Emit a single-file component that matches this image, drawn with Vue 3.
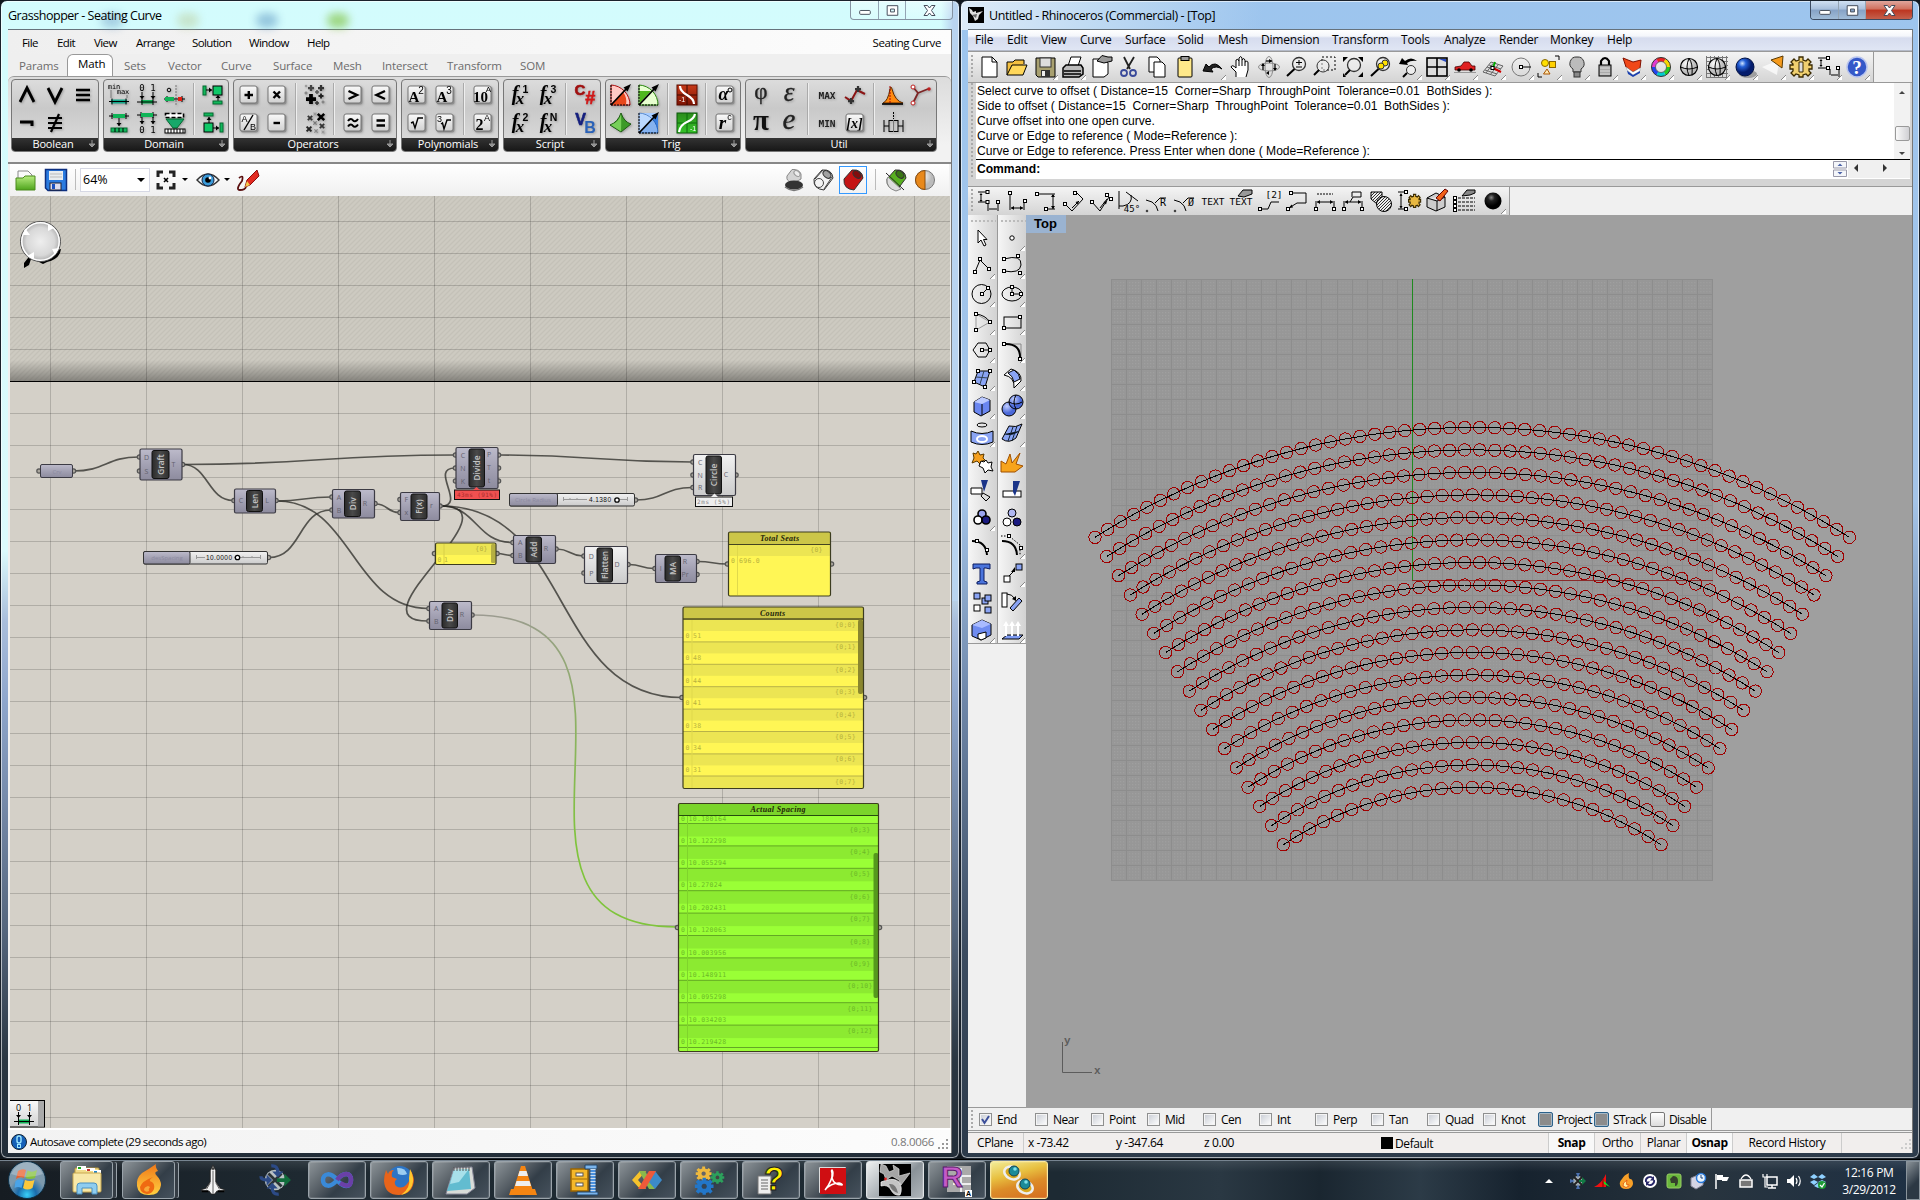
<script setup>
const F = 'font-family="Liberation Sans"'
const K = 'stroke="#000" fill="none"'
const p = (d, a = K) => `<path d="${d}" ${a}/>`
const r = (x, y, w, h, a) => `<rect x="${x}" y="${y}" width="${w}" height="${h}" ${a}/>`
const c = (x, y, q, a) => `<circle cx="${x}" cy="${y}" r="${q}" ${a}/>`
const t = (x, y, s, size, a = F) => `<text x="${x}" y="${y}" font-size="${size}" text-anchor="middle" letter-spacing="0" ${a}>${s}</text>`
const sq = (x, y) => r(x - 1.5, y - 1.5, 3, 3, 'fill="#fff" stroke="#000"')
const B = 'fill="#000"'
const SER = 'font-family="Liberation Serif" font-weight="bold"'
const ITA = 'font-family="Liberation Serif" font-style="italic" font-weight="bold"'
const MONO = 'font-family="DejaVu Sans Mono"'
const key = (s) => r(3.5, 3.5, 18, 18, 'rx="2" fill="#777" opacity=".5"') + r(3, 3, 17, 17, 'rx="2" fill="url(#gKey)" stroke="#777"') + s
const G = 'fill="#0fb457"'
const GB = 'fill="#12b85c" stroke="#046b30"'
const fx = (s) => t(8, 17, 'f', 20, ITA) + t(13, 21, 'x', 17, ITA) + t(18.5, 9.5, s, 10.5, F + ' font-weight="bold"')
const plus = (x, y, s, col) => p(`M${x - s} ${y}H${x + s}M${x} ${y - s}V${y + s}`, `stroke="${col}" stroke-width="${s * 0.75}"`)
const cross = (x, y, s, col) => p(`M${x - s} ${y - s}L${x + s} ${y + s}M${x - s} ${y + s}L${x + s} ${y - s}`, `stroke="${col}" stroke-width="${s * 0.8}"`)
const arrowDn = (x, y1, y2) => p(`M${x} ${y1}V${y2}`) + p(`M${x - 2.5} ${y2 - 3}H${x + 2.5}L${x} ${y2}Z`, B)
const barH = (y) => p(`M2 ${y}H22M5 ${y - 3}V${y + 3}M19 ${y - 3}V${y + 3}`)

const ribbonIcons = {
  and: p('M5 19L12 5L19 19', 'stroke="#000" stroke-width="2.8" fill="none"'),
  or: p('M5 5L12 19L19 5', 'stroke="#000" stroke-width="2.8" fill="none"'),
  equiv: p('M5 7H19M5 12H19M5 17H19', 'stroke="#000" stroke-width="2.4"'),
  not: p('M5 11H17V15', 'stroke="#000" stroke-width="3" fill="none"'),
  neq: p('M5 7H19M5 12H19M5 17H19M16 3L8 21', 'stroke="#000" stroke-width="2.2"'),
  minmax: t(7, 6, 'min', 7, MONO) + t(16, 11, 'max', 7, MONO) + r(4, 16.5, 16, 4, 'fill="#12a88a"') + barH(18.5) + p('M4 7V15M20 12V15', 'stroke="#777"'),
  dom01: t(7, 8, '0', 9, MONO) + t(18, 8, '1', 9, MONO) + r(6, 17, 12, 3.5, G) + p('M2 19H22M7 16V22M18 16V22') + arrowDn(7, 9, 16) + arrowDn(18, 9, 16),
  inc: c(6, 7, 1.8, 'fill="none" stroke="#000"') + p('M13 2V22', 'stroke="#777" stroke-dasharray="2 1"') + p('M1 16H22M4 13V19M19 13V19') + r(2, 14, 9, 4, G) + r(15, 14, 4, 4, 'fill="#e22012"'),
  consec: p('M2 5H22M5 2V8M19 2V8') + r(6, 3, 12, 4, G) + arrowDn(12, 7, 15) + r(4, 17, 16, 4, GB) + p('M8 17V21M12 17V21M16 17V21'),
  divdom: p('M2 4H22M6 1V7M18 1V7') + r(6, 2, 12, 4, G) + arrowDn(7, 6, 13) + arrowDn(18, 6, 13) + t(7, 22, '0', 9, MONO) + t(18, 22, '1', 9, MONO),
  remap: r(2.5, 2.5, 18, 4, 'fill="#fff" stroke="#000" stroke-dasharray="4 2" stroke-width="1.6"') + p('M3 8H21L14 17H10Z', 'fill="#17a86a" stroke="#046b30"') + r(2, 18, 20, 4, 'fill="#fff" stroke="#000"') + p('M5 18V22M8 18V22M11 18V22M14 18V22M17 18V22M20 18V22'),
  sq1: r(2, 3, 3, 9, GB) + r(12, 3, 9, 9, 'fill="#10c868" stroke="#000"') + p('M5 7H11M17 13V18') + p('M8 4.5V9.5L11 7ZM14.5 15H19.5L17 12Z', B) + r(12, 18, 9, 3, GB),
  sq2: r(3, 2, 9, 3, GB) + r(3, 12, 9, 9, 'fill="#10c868" stroke="#000"') + p('M8 6V12M12 17H18') + p('M5.5 9H10.5L8 6ZM15 14.5V19.5L18 17Z', B) + r(19, 12, 3, 9, GB),
  add: key(p('M7.5 12H16M11.8 8V16', 'stroke="#000" stroke-width="2.4"')),
  mul: key(p('M8.5 8.5L15 15M15 8.5L8.5 15', 'stroke="#000" stroke-width="2.4"')),
  div: key(t(7.5, 11, 'A', 9) + t(16, 19, 'B', 9) + p('M7 19L16 4', 'stroke="#000" stroke-width="1.4"')),
  sub: key(p('M8.5 12H15', 'stroke="#000" stroke-width="2.4"')),
  mass: plus(8, 16, 5, '#000') + plus(18, 5, 3, '#333') + plus(8, 5, 3, '#444') + plus(18, 13, 2.5, '#222') + plus(14, 9, 2, '#555') + plus(14, 20, 2, '#333') + plus(3, 10, 1.6, '#777') + plus(20, 19, 1.6, '#777') + plus(3, 3, 1.2, '#888'),
  massx: cross(18, 6, 3.2, '#000') + cross(7, 7, 2.2, '#333') + cross(6, 18, 2.4, '#222') + cross(19, 15, 2.2, '#333') + cross(12, 12, 1.6, '#777') + cross(13, 20, 1.6, '#888') + cross(12, 3, 1.4, '#999') + cross(20, 21, 1.4, '#999'),
  gt: key(p('M7.5 8L16 12L7.5 16', 'stroke="#000" stroke-width="2.4" fill="none"')),
  lt: key(p('M16 8L7.5 12L16 16', 'stroke="#000" stroke-width="2.4" fill="none"')),
  approx: key(p('M7 10C9 7 11 8 12 9.3S15 11 17 8M7 15.5C9 12.5 11 13.5 12 14.8S15 16.5 17 13.5', 'stroke="#000" stroke-width="2" fill="none"')),
  eq: key(p('M7.5 9.5H16M7.5 14.5H16', 'stroke="#000" stroke-width="2.4"')),
  a2: key(t(9, 18.5, 'A', 15, SER) + t(16, 10.5, '2', 10)),
  a3: key(t(9, 18.5, 'A', 15, SER) + t(16, 10.5, '3', 10)),
  p10: key(t(9.5, 18.5, '10', 15, SER) + t(17.5, 9, 'A', 8)),
  sqrt: key(p('M6 12L8 11L10 17L13 7H18', 'stroke="#000" stroke-width="1.4" fill="none"')),
  cbrt: key(p('M8 13L9.5 12L11 18L14 9H18', 'stroke="#000" stroke-width="1.4" fill="none"') + t(6.5, 10.5, '3', 9)),
  p2a: key(t(8.5, 18.5, '2', 16, SER) + t(16, 10, 'A', 9)),
  fx1: fx('1'), fx3: fx('3'), fx2: fx('2'), fxn: fx('N'),
  cs: t(7, 12, 'C', 15, F + ' font-weight="bold" fill="#a01010" stroke="#a01010" stroke-width=".6"') + t(17, 21, '#', 18, F + ' font-weight="bold" font-style="italic" fill="#d01818" stroke="#d01818" stroke-width=".6"'),
  vb: t(7.5, 14, 'V', 16, F + ' font-weight="bold" fill="#16207e" stroke="#16207e" stroke-width=".6"') + t(17, 22, 'B', 16, F + ' font-weight="bold" fill="#2a62b8"'),
  sin: p('M2 22V2A20 20 0 0 1 21 22Z', 'fill="#ffc9c4" stroke="#b01010"') + p('M2 22L14 9A16 16 0 0 1 17 22Z', 'fill="#e8481c"') + p('M2 22V2M2 22H21', 'stroke="#000" stroke-dasharray="2 1"') + p('M2 22L19 4', 'stroke="#000" stroke-width="1.8"') + p('M22 1L14.5 4.5L18.5 8.5Z', B),
  cos: p('M2 22V2A20 20 0 0 1 21 22Z', 'fill="#e8ffd0" stroke="#2c8a10"') + p('M2 8H14L3 20Z', 'fill="#4fb81c"') + p('M2 22V2M2 22H21', 'stroke="#000" stroke-dasharray="2 1"') + p('M2 22L19 4', 'stroke="#000" stroke-width="1.8"') + p('M22 1L14.5 4.5L18.5 8.5Z', B),
  tan: p('M2 22V2H21V22Z', 'fill="#a8ccff"') + p('M2 22L21 3V22Z', 'fill="#3a7fe0"') + p('M2 22V2A20 20 0 0 1 21 22Z', 'fill="#d0e6ff" opacity=".5" stroke="#124a9a"') + p('M2 22V2M2 22H21', 'stroke="#000" stroke-dasharray="2 1"') + p('M2 22L19 4', 'stroke="#000" stroke-width="1.8"') + p('M22 1L14.5 4.5L18.5 8.5Z', B),
  sinc: p('M1 14Q9 11 12 2Q15 11 22 13L12 21Z', 'fill="#3c9a28" stroke="#1d5a12"') + p('M12 3Q12.5 13 12 20.5L2 14Q10 11 12 3Z', 'fill="#8be26a" opacity=".75"'),
  acos: r(2, 2, 20, 20, 'fill="url(#gRed)" stroke="#5a0c00"') + p('M2 12H22M12 2V22', 'stroke="#3c0800"') + p('M5 3Q5 8 12 12T19 21', 'stroke="#fff" stroke-width="2.2" fill="none"') + t(7, 19, '-1', 7, F + ' fill="#fff"'),
  asin: r(2, 2, 20, 20, 'fill="url(#gGrn)" stroke="#0b5a0b"') + p('M2 12H22M12 2V22', 'stroke="#0b6a0b"') + p('M4 21Q5 14 12 11T20 3', 'stroke="#fff" stroke-width="2.2" fill="none"') + t(18, 20, '-1', 7, F + ' fill="#fff"'),
  alpha: key(t(10.5, 17, 'α', 18, ITA) + c(17, 7, 2, 'fill="none" stroke="#000"')),
  rad: key(t(9.5, 18, 'r', 19, ITA) + t(16.5, 9, 'c', 9, F)),
  phi: t(12, 16, 'φ', 23, 'font-family="Liberation Serif" fill="#222" stroke="#222" stroke-width=".3"'),
  eps: t(12, 18, 'ε', 27, 'font-family="Liberation Serif" font-style="italic" fill="#222" stroke="#222" stroke-width=".3"'),
  pi: t(12, 19, 'π', 29, 'font-family="Liberation Serif" font-weight="bold" fill="#111"'),
  e: t(12, 18, 'e', 29, 'font-family="Liberation Serif" font-style="italic" fill="#222" stroke="#222" stroke-width=".3"'),
  max: t(12, 16, 'MAX', 9.5, MONO + ' font-weight="bold" fill="#222"'),
  min: t(12, 16, 'MIN', 9.5, MONO + ' font-weight="bold" fill="#222"'),
  extr: p('M2 14L8 18L14 7L22 11', 'stroke="#8c1414" stroke-width="2" fill="none"') + plus(8, 18, 3, '#333') + plus(15, 6, 3, '#333'),
  trunc: key(t(11.5, 16.5, '[x]', 14, ITA)),
  gauss: p('M2 20Q7 18 9 6Q10 2 11 6Q14 18 22 20Z', 'fill="#ff8a10" stroke="#5a2a00"') + p('M9 3V20', 'stroke="#a00" stroke-dasharray="2 1"') + p('M1 21H22', 'stroke="#000" stroke-width="1.6"'),
  bary: p('M4 4L9 10L4 20M9 10L19 6', 'stroke="#7c2424" stroke-width="1.8" fill="none"') + c(4, 4, 2, 'fill="#fff" stroke="#c02020"') + c(4, 20, 2, 'fill="#fff" stroke="#c02020"') + c(20, 6, 1.8, 'fill="#c02020"'),
  box: p('M3 9V21M22 9V21M3 15H8M17 15H22') + p('M12.5 1V8', 'stroke="#000" stroke-dasharray="2 1"') + r(8, 9.5, 9, 11, 'fill="none" stroke="#000"') + p('M12.5 9V21', 'stroke="#777"'),
}

const panels = [
  { name: 'Boolean', groups: [['and', 'or', 'equiv', 'not', 'neq']], cols: [3] },
  { name: 'Domain', groups: [['minmax', 'dom01', 'inc', 'consec', 'divdom', 'remap'], ['sq1', 'sq2']], cols: [3, 1] },
  { name: 'Operators', groups: [['add', 'mul', 'div', 'sub'], ['mass', 'massx'], ['gt', 'lt', 'approx', 'eq']], cols: [2, 1, 2] },
  { name: 'Polynomials', groups: [['a2', 'a3', 'sqrt', 'cbrt'], ['p10', 'p2a']], cols: [2, 1] },
  { name: 'Script', groups: [['fx1', 'fx3', 'fx2', 'fxn'], ['cs', 'vb']], cols: [2, 1] },
  { name: 'Trig', groups: [['sin', 'cos', 'sinc', 'tan'], ['acos', 'asin'], ['alpha', 'rad']], cols: [2, 1, 1] },
  { name: 'Util', groups: [['phi', 'eps', 'pi', 'e'], ['max', 'extr', 'min', 'trunc'], ['gauss', 'bary', 'box']], cols: [2, 2, 2] },
]

const ghMenu = [['File', 35], ['Edit', 37], ['View', 42], ['Arrange', 56], ['Solution', 57], ['Window', 58], ['Help', 40]]
const ghTabs = [['Params', 60], ['Math', 46], ['Sets', 44], ['Vector', 53], ['Curve', 52], ['Surface', 60], ['Mesh', 49], ['Intersect', 65], ['Transform', 73], ['SOM', 40]]
const rhMenu = [['File', 32], ['Edit', 34], ['View', 39], ['Curve', 45], ['Surface', 52.5], ['Solid', 40.5], ['Mesh', 43], ['Dimension', 71], ['Transform', 69], ['Tools', 43], ['Analyze', 55], ['Render', 51], ['Monkey', 57], ['Help', 40]]

const tube = (fill, y = 0) => p(`M3 ${11 + y}L11 ${2 + y}Q21 ${1 + y} 22 ${10 + y}L13 ${22 + y}Q2 ${21 + y} 3 ${11 + y}Z`, `fill="${fill}" stroke="#333"`) + `<ellipse cx="16" cy="${6.5 + y}" rx="4.5" ry="3" transform="rotate(40 16 ${6.5 + y})" fill="#0005" stroke="#333"/>`
const gh = {
  open: p('M4 3H14L18 7V14H4Z', 'fill="#fafafa" stroke="#888"') + p('M2 10H9L11 8H21V22H2Z', 'fill="url(#gFold)" stroke="#4a8a1c"'),
  save: p('M1.500 1.500H22.500V22.500H4L1.500 20Z', 'fill="#2a7be0" stroke="#0c2f80" stroke-width="1.5"') + r(5, 3, 14, 9, 'fill="#e8ecf0"') + p('M6 6H18M6 9H18', 'stroke="#bbb"') + r(6, 15, 11, 7, 'fill="#dde" stroke="#223"') + r(8, 16, 3, 5, 'fill="#1a50c0"'),
  zoom: p('M4 9V4H9M15 4H20V9M20 15V20H15M9 20H4V15', 'stroke="#222" stroke-width="3" fill="none"') + p('M10 10L14 14M14 10L10 14', 'stroke="#000" stroke-width="1.6"'),
  eye: p('M1 12Q12 0 23 12Q12 24 1 12Z', 'fill="#eef4f8" stroke="#333" stroke-width="1.4"') + c(12, 12, 6, 'fill="#3a9ad8" stroke="#124"') + c(12, 12, 2.8, B) + c(14, 10, 1.4, 'fill="#fff"'),
  pen: p('M3 10Q8 6 6 13Q-1 22 4 22Q9 22 10 19', 'stroke="#5a1010" stroke-width="1.8" fill="none"') + p('M9 19L11 12L21 2L23 8L14 17Z', 'fill="#e22a20" stroke="#8a0c0c"') + p('M9 19L11 13L14 17Z', 'fill="#f6c84c"'),
  none: p('M5 8L10 1.500Q17 1 19 6V11Q16 14 9 14Q4 13 5 8Z', 'fill="#d4d4d4" stroke="#888"') + '<ellipse cx="15" cy="5.500" rx="3.500" ry="2.300" transform="rotate(40 15 5.500)" fill="#eee" stroke="#999"/><ellipse cx="12" cy="17" rx="9" ry="4.500" fill="#333"/>' + p('M3 19Q12 26 21 19', 'stroke="#777" stroke-width="1.5" fill="none"'),
  wire: tube('#f4f4f4') + c(8, 15, 4.5, 'fill="none" stroke="#444"') + p('M4 11L12 2M13 21L21 9', 'stroke="#444"'),
  shade: tube('#c41414'),
  sel: tube('#58b020') + p('M4 9L17 21L12 23Q2 20 3 11Z', 'fill="#ddd" stroke="#888"') + p('M2 5L20 22', 'stroke="#222"'),
  half: c(12, 12, 9.5, 'fill="url(#gBall)" stroke="#777"') + p('M12 2.5A9.5 9.5 0 0 0 12 21.5Z', 'fill="#e8891c" stroke="#8a4c0c"'),
}

const gearD = 'M10 2H14V5L17 6L19 4L22 7L20 9V10H23V14H20V16L22 18L19 21L17 19L14 20V22H10V20L7 19L5 21L2 18L4 16V14H1V10H4V9L2 7L5 4L7 6L10 5Z'
const lens = c(14, 9, 6.5, 'fill="#eee8" stroke="#333" stroke-width="1.3"') + p('M9.5 14L2 21', 'stroke="#000" stroke-width="2"')
const hand = p('M8 6L13 0.500L19 2H23V6L15 8Z', 'fill="#999" stroke="#000"')
const globe = c(12, 12, 8.500, 'fill="url(#gBall)" stroke="#000" stroke-width="1.200"') + p('M3.500 12Q12 16 20.500 12M12 3.500Q8 12 12 20.500M12 3.500Q16 8 15 20')
const rhTop = [
  p('M5 2H15L20 7V22H5Z', 'fill="#fff" stroke="#000"') + p('M15 2V7H20'),
  p('M2 20V7H8L10 5H19V9', 'fill="#f4c040" stroke="#000"') + p('M2 20L7 10H22L18 20Z', 'fill="#ffd75a" stroke="#000"'),
  p('M3 3H22V22H5L3 20Z', 'fill="#a8a070" stroke="#000"') + r(7, 3, 11, 9, 'fill="#ddd" stroke="#333"') + r(8, 15, 9, 7, 'fill="#333"') + r(9, 16, 3, 5, 'fill="#eee"'),
  p('M7 11L10 2H20L17 11Z', 'fill="#fff" stroke="#000"') + p('M2 13L5 10H20L22 13V19L18 22H2Z', 'fill="#bbb" stroke="#000" stroke-width="1.5"') + p('M3 16H20M3 19H20', 'stroke="#000" stroke-width="1.5"'),
  p('M4 4H16L19 8V19L15 22H4Z', 'fill="#fff" stroke="#000"') + hand,
  p('M7 2L13 14M17 2L10 14', 'stroke="#222" stroke-width="1.8"') + c(7, 18, 3, 'fill="none" stroke="#3a4a9a" stroke-width="1.8"') + c(16, 18, 3, 'fill="none" stroke="#3a4a9a" stroke-width="1.8"'),
  p('M4 2H12L15 5V17H4Z', 'fill="#fff" stroke="#000"') + p('M9 7H17L20 10V22H9Z', 'fill="#fff" stroke="#000"'),
  r(5, 3, 14, 19, 'rx="1" fill="#ffe98a" stroke="#000"') + r(8, 1.5, 8, 4, 'fill="#999" stroke="#000"'),
  p('M2 16L5 9L8 12Q14 5 21 14Q15 10 10 14L12 17Z', 'fill="#222" stroke="#000"'),
  p('M7 22V17L2 12Q3 9 7 13V5Q9 3 10 6V3Q12 0 13 3V5Q15 2 16 5V7Q19 5 19 8V15L17 22', 'fill="#fff" stroke="#000"') + p('M10 6V11M13 5V11M16 7V11'),
  '<ellipse cx="12" cy="12" rx="10.5" ry="4" fill="none" stroke="#888"/><ellipse cx="12" cy="12" rx="4" ry="10.5" fill="none" stroke="#888"/>' + p('M6 9V15M18 9V15M9 6H15', 'stroke="#222" stroke-width="1.5"') + p('M4 11L6 8L8 11ZM16 13L18 16L20 13ZM12 4V8L15 6ZM12 16V20L9 18Z', B),
  lens + p('M11 7.5H17M14 5V10M11 12H17'),
  r(9, 2, 13, 13, 'fill="none" stroke="#000" stroke-dasharray="2 2"') + c(10, 11, 6, 'fill="#eee8" stroke="#333"') + p('M6 15L1 20', 'stroke="#000" stroke-width="2"'),
  c(13, 10, 6.5, 'fill="#eee8" stroke="#333" stroke-width="1.3"') + p('M9 15L4 20', 'stroke="#000" stroke-width="2"') + p('M2 2H7L2 7ZM22 2H17L22 7ZM22 22H17L22 17ZM2 22H5L2 18Z', B),
  lens + c(16, 8, 3, 'fill="#ffe000" stroke="#333"') + c(12, 11, 3, 'fill="#ffe000" stroke="#333"'),
  p('M2 9L5 3L8 6Q14 1 20 6Q14 5 10 8L11 10Z', B) + c(14, 15, 4.5, 'fill="#eee" stroke="#333"') + p('M10 18L6 22', 'stroke="#000" stroke-width="2"'),
  r(2, 3, 20, 18, 'fill="#ddd" stroke="#000" stroke-width="1.6"') + p('M12 3V21M2 12H22', 'stroke="#000" stroke-width="1.6"') + p('M14 4H21V7Z', 'fill="#2a4ac0"'),
  p('M2 15V12L8 11L11 7H16L19 11H22V15Z', 'fill="#e02020" stroke="#400" stroke-width=".8"') + c(6, 15, 1.800, B) + c(18, 15, 1.800, B) + p('M1 17.5H23', 'stroke="#999"'),
  p('M2 17L10 7L22 11L14 21ZM6 12L18 16M12 8.5L5 18M17 10L9 20M4 15L16 19M8 10L20 14', 'fill="#ddd" stroke="#666"') + p('M12 13L14 7', 'stroke="#0a0" stroke-width="2"') + p('M12 13L20 17', 'stroke="#c00" stroke-width="2"') + sq(11.5, 13),
  c(12, 12, 9, 'fill="none" stroke="#777"') + p('M12 12H22') + sq(12, 12),
  c(8, 8, 3.5, 'fill="#ffe000" stroke="#860"') + r(12.5, 6.5, 6, 6, 'fill="#ffd000" stroke="#860"') + p('M10 14L13 19H6.5Z', 'fill="#ffe8b0" stroke="#a50"') + p('M18 1H22V5M1 18V22H5'),
  p('M12 2A6.5 6.5 0 0 1 16 14V17H8V14A6.5 6.5 0 0 1 12 2Z', 'fill="#bbb" stroke="#333"') + r(9, 17, 6, 5, 'fill="#888" stroke="#333"'),
  p('M8 11V6Q12 0 16 6V11', 'stroke="#000" stroke-width="2.2" fill="none"') + r(6, 10, 12, 11, 'fill="#aaa" stroke="#000"') + p('M7 13H17M7 16H17M7 19H17', 'stroke="#ddd"'),
  p('M2 3L12 7L20 5L19 13L12 17L5 12Z', 'fill="#f04818" stroke="#801000"') + p('M5 12L12 17L19 13V16L12 20L6 15Z', 'fill="#fff" stroke="#999" stroke-width=".5"') + p('M6 15.500L12 20L19 16V18L12 22L7 19Z', 'fill="#1a40b0"'),
  [0, 60, 120, 180, 240, 300].map((a, i) => `<path d="M12 12m-7.500 0a7.500 7.500 0 0 1 3.750 -6.500" transform="rotate(${a} 12 12)" fill="none" stroke-width="4" stroke="${['#e23ad0', '#e22', '#f6d800', '#2c2', '#0cc', '#24e'][i]}"/>`).join('') + c(12, 12, 9.500, 'fill="none" stroke="#333"') + c(12, 12, 5.500, 'fill="none" stroke="#555" stroke-width=".8"'),
  globe,
  p('M1.500 1V23M5.500 1V23M9.500 1V23M13.500 1V23M17.500 1V23M21.500 1V23M1 2.500H23M1 6.500H23M1 10.500H23M1 14.500H23M1 18.500H23M1 22.500H23', 'stroke="#777"') + globe,
  '<ellipse cx="15" cy="19" rx="9" ry="4" fill="#777" opacity=".6"/>' + c(12, 12, 9, 'fill="url(#gBlue)" stroke="#014"'),
  p('M1 12L18 5L16 20Z', 'fill="#fff" opacity=".7"') + p('M10 5L22 1L21 13Z', 'fill="#f59a1c" stroke="#5a3a00"'),
  p(gearD, 'fill="#f0d070" stroke="#3a2a00" stroke-width="1.300"') + p('M10 7H14V17H10Z', 'fill="#ddd" stroke="#3a2a00"'),
  p('M1 3H11M4 5V11M1 13H11M13 14V20M22 14V22M14 20H21') + sq(11, 3) + sq(11, 13) + sq(21, 13) + p('M2.5 6H5.5L4 4ZM2.5 10H5.5L4 12Z', B),
  c(12, 12, 10, 'fill="#3558c8" stroke="#b8c4ee" stroke-width="1.5"') + t(12, 18.5, '?', 19, SER + ' fill="#fff"'),
]
const rhDim = [
  p('M1 3H11M4 5V12M1 13H11M11 14V22M21 14V22M12 20H20') + sq(10.5, 3) + sq(10.5, 13) + sq(21, 13) + p('M2.5 6H5.5L4 4ZM2.5 11H5.5L4 13Z', B),
  p('M5 5V21M19 13V21M6 19H18') + sq(5, 4) + sq(20, 12) + p('M6 19L9 17V21ZM18 19L15 17V21Z', B),
  p('M4 5H22M20 6V20M14 20H22') + sq(4, 5) + sq(13, 20) + p('M20 5L18 8H22ZM20 20L18 17H22Z', B),
  p('M4 15L11 22L22 10L15 3M11 19L18 12') + sq(4, 15) + sq(14, 4) + p('M18 12L14.5 13L17 15.5Z', B),
  p('M3 13L11 22L20 8M11 19L18 10') + sq(3, 13) + sq(18, 6) + sq(22, 10) + p('M18 12L14.5 13L17 15.5Z', B),
  p('M2 2V20M2 17H6Q16 15 14 6M9 3L21 12') + t(15, 23, '45°', 9, MONO),
  p('M1 11L7 13Q12 16 13 22M10 14L15 9H21') + t(18, 17, 'R', 10, MONO) + plus(2, 22, 1.200, '#000'),
  p('M1 11L7 13Q12 16 13 22M10 14L15 9H21') + t(18, 17, 'Ø', 10, MONO) + plus(2, 22, 1.200, '#000'),
  t(12, 16, 'TEXT', 9.5, MONO),
  t(12, 16, 'TEXT', 9.5, MONO) + p('M9 7L14 1H23V5L15 8Z', 'fill="#999" stroke="#000"'),
  p('M4 20H11L14 13H22') + sq(3, 20) + t(17, 9, '[2]', 9.500, MONO),
  p('M6 4H21V14H12L4 19') + sq(6, 4) + sq(3, 20) + p('M4 19L8 18.500L6.500 15.500Z', B),
  p('M3 12V20M21 12V20M4 13H20') + p('M4 5H20', 'stroke="#000" stroke-dasharray="2 1"') + sq(3, 20) + sq(21, 20) + p('M4 13L7 11V15ZM20 13L17 11V15Z', B),
  p('M3 12V20M21 12V20M4 13H20M9 13L12 8H20V3H11V8') + sq(3, 20) + sq(21, 20) + p('M4 13L7 11V15ZM20 13L17 11V15Z', B),
  p('M2 3H13V10Q8 12 8 15L2 10Z', 'fill="url(#gHatch)" stroke="#000"') + c(15, 15, 7.5, 'fill="url(#gHatch)" stroke="#000"'),
  p('M1 3H9M4 5V18M1 20H9') + sq(9, 3) + sq(9, 20) + `<g transform="translate(11 4) scale(.55 .65)">${p(gearD, 'fill="#e8b840" stroke="#3a2a00" stroke-width="2"')}</g>` + p('M2.5 7H5.5L4 4ZM2.5 17H5.5L4 20Z', B),
  p('M2 9L11 4L20 8V18L11 22L2 18ZM2 9L12 12L20 8M12 12V22', 'fill="#ccc" stroke="#000"') + p('M11 9L20 0L23 2L15 12Z', 'fill="#f06018" stroke="#600"'),
  p('M5 9H22M5 13H22M5 17H22M5 21H22', 'stroke="#000" stroke-dasharray="3 1"') + sq(2, 9) + sq(2, 13) + sq(2, 17) + sq(2, 21) + p('M9 7L14 1H22V4L17 6Z', 'fill="#888" stroke="#000"'),
  c(12, 12, 8.5, 'fill="url(#gBlk)"'),
]
const BL = 'fill="#8aa4f4" stroke="#000"'
const rhSide = [
  p('M8 4V17L11 14L14 20L16 19L13.5 13.5H17Z', 'fill="#fff" stroke="#000"'), c(12, 12, 2.2, 'fill="#fff" stroke="#000"'),
  p('M5 18L10 6L19 15') + sq(5, 18) + sq(10, 5) + sq(19, 15), p('M4 5Q22 0 21 11Q20 20 4 17') + sq(4, 5) + sq(4, 17) + sq(18, 2) + sq(20, 19),
  c(11.5, 12, 9.5, 'fill="none" stroke="#000"') + p('M12 12L18 6') + sq(12, 12) + sq(18, 6), '<ellipse cx="12" cy="12" rx="10" ry="7" fill="none" stroke="#000"/>' + p('M12 5V12H21') + sq(12, 5) + sq(12, 12) + sq(21, 12),
  p('M6 20V4L20 12Z', 'stroke="#999" fill="none"') + p('M6 4Q15 5 20 12') + sq(6, 4) + sq(6, 20) + sq(20, 12), r(4, 7, 17, 11, 'fill="none" stroke="#000"') + sq(4, 18) + sq(20, 7),
  p('M3 12L8 5H16L20 12L16 19H8ZM12 12H20') + sq(12, 12) + sq(20, 12), p('M4 6H21V21', 'stroke="#888" fill="none"') + p('M4 6Q21 5 20 21', 'stroke="#000" stroke-width="2" fill="none"') + sq(4, 6) + sq(20, 21),
  p('M8 5H20L15 21L4 16Z', BL) + p('M6 11L18 12M14 5L10 18', 'stroke="#345"') + sq(8, 5) + sq(20, 5) + sq(4, 16) + sq(15, 21), p('M4 9L11 3Q22 6 21 15L14 22Q15 11 4 9Z', 'fill="#fff" stroke="#000"') + p('M8 7L14 4Q20 8 20 13L14 16Q13 10 8 7Z', BL),
  p('M4 8L12 3L20 6V17L11 22L4 18Z', 'fill="#6a86f0" stroke="#000"') + p('M4 8L12 3L20 6L12 10Z', 'fill="#bccaff"') + p('M12 10V21'), c(9, 15, 7, 'fill="url(#gBlue2)" stroke="#000"') + c(16, 8, 7, 'fill="url(#gBlue2)" stroke="#000"') + p('M9 8Q16 12 22 8M16 1Q12 8 16 15'),
  '<ellipse cx="12" cy="3" rx="5" ry="2" fill="none" stroke="#000"/>' + p('M1 9Q12 14 23 9V20Q12 25 1 20Z', BL) + '<ellipse cx="12" cy="17" rx="5" ry="3" fill="#8aa4f4" stroke="#fff" stroke-width="2"/>', p('M2 17L9 4Q16 6 22 2L16 16Q9 22 2 17Z', BL) + p('M5 12Q12 14 19 9M13 5L8 19M17 4L12 19', 'stroke="#123"'),
  p('M3 3L6 4L8 1L10 5L14 4L13 8L15 10L12 11L10 14L7 11L2 13L4 8Z', 'fill="#f5a020" stroke="#5a3a00"') + p('M11 11L14 12L16 10L18 13L22 12L21 17L23 21L18 20L15 23L13 18L9 16Z', 'fill="#fff" stroke="#000"'), p('M1 22V11L6 14L10 4L12 13L20 3L16 14L23 16L15 22Z', 'fill="#f7a41c" stroke="#a05000"'),
  p('M1 10H12V16H1Z', 'fill="#fff" stroke="#000"') + p('M13 15L20 19L16 23L11 18Z', 'fill="#ddd" stroke="#000"') + p('M11 2H18L14 14Z', 'fill="#1a3488"'), r(3, 13, 18, 6, 'fill="#fff" stroke="#000"') + p('M13 3H20L15 18L13 14Z', 'fill="#1a3488"'),
  c(12, 8, 4, 'fill="#9aa4ee" stroke="#000" stroke-width="1.6"') + c(8, 14, 4, 'fill="#fff" stroke="#000" stroke-width="1.6"') + c(16, 14, 4, 'fill="#1a1a80" stroke="#000" stroke-width="1.6"'), c(12, 7, 4, 'fill="#b0b8f4" stroke="#000"') + c(7, 16, 4, 'fill="#fff" stroke="#000"') + c(17, 16, 4, 'fill="#1a1a80" stroke="#000"'),
  p('M2 7Q16 7 17 21', 'stroke="#000" stroke-width="2" fill="none"') + sq(7, 7) + sq(17, 16), p('M2 7Q16 7 17 21', 'stroke="#000" stroke-width="2" fill="none"') + p('M1 2H9L20 11V21', 'stroke="#000" stroke-dasharray="1.5 1.5" fill="none"') + sq(9, 2) + sq(21, 14),
  p('M3 2H20V7L16 6H14V19L17 20V22H7V20L10 19V6H6L3 7Z', 'fill="#4a74dc" stroke="#0c1c60"'), p('M8 15L15 8') + p('M15 5V10H11Z', B) + r(4, 14, 6, 6, 'fill="#fff" stroke="#000"') + r(16, 2, 6, 6, BL),
  r(4, 3, 6, 6, BL) + r(12, 8, 6, 6, BL) + r(15, 5, 6, 6, BL) + r(4, 15, 6, 6, 'fill="#fff" stroke="#000"') + r(15, 17, 6, 6, BL), r(2, 3, 5, 14, 'fill="#fff" stroke="#000"') + p('M7 4Q12 4 15 9') + p('M16 11V6L12 9Z', B) + p('M10 18L19 8L22 11L13 21Z', BL),
  p('M2 7L12 2L21 6V17L11 22L2 18Z', 'fill="#6f8cf0" stroke="#000"') + p('M2 7L12 2L21 6L12 10Z', 'fill="#a9bbff"') + p('M8 16L16 14V20L11 22L8 20Z', 'fill="#fff" stroke="#000"'), p('M2 21L7 17H23L19 21Z', 'fill="#7f9cf4" stroke="#000"') + p('M6 18V6M12 18V6M18 18V6', 'stroke="#fff" stroke-width="2"') + p('M3 8L6 3L9 8ZM9 8L12 3L15 8ZM15 8L18 3L21 8Z', 'fill="#fff"'),
]
const sideRows = Array.from({ length: 15 }, (_, i) => i)

/* Grasshopper canvas */
const comps = [
  { x: 140, y: 449, w: 42, h: 31, n: 'Graft', l: 152, lw: 17, i: [['D', 457], ['S', 471]], o: [['T', 464.5]] },
  { x: 234.5, y: 489, w: 41, h: 24, n: 'Len', l: 246.5, lw: 16, i: [['C', 500.5]], o: [['L', 500.5]] },
  { x: 332.5, y: 489.5, w: 42, h: 28.5, n: 'Div', l: 344.5, lw: 16, i: [['A', 497], ['B', 510]], o: [['R', 503.5]] },
  { x: 400.5, y: 492.5, w: 39, h: 28, n: 'F(x)', l: 411, lw: 16, i: [['F', 499.5], ['x', 512.5]], o: [['r', 506]] },
  { x: 456, y: 447.5, w: 42, h: 41, n: 'Divide', l: 469, lw: 15.5, i: [['C', 455], ['N', 468], ['K', 481]], o: [['P', 455], ['T', 468], ['t', 481]] },
  { x: 693.5, y: 454.5, w: 42, h: 41, n: 'Circle', l: 706, lw: 15.5, light: 1, i: [['C', 462], ['N', 475], ['R', 487.5]], o: [['C', 475]] },
  { x: 513.5, y: 535.5, w: 42, h: 28, n: 'Add', l: 526, lw: 15.5, i: [['A', 542.5], ['B', 555.5]], o: [['R', 549]] },
  { x: 584.5, y: 546.5, w: 43, h: 37, n: 'Flatten', l: 597, lw: 15.5, light: 1, i: [['D', 556], ['P', 573]], o: [['D', 564.5]] },
  { x: 655.5, y: 554.5, w: 41, h: 28, n: 'MA', l: 665, lw: 15.5, i: [['I', 568.5]], o: [['R', 561.5], ['Pr', 574.5]] },
  { x: 429.5, y: 601.5, w: 42, h: 28, n: 'Div', l: 442, lw: 15.5, i: [['A', 608.5], ['B', 621]], o: [['R', 615]] },
]
const wire = ([x1, y1, x2, y2]) => {
  const k = Math.max(Math.abs(x2 - x1) / 2, Math.abs(y2 - y1) * 0.69)
  return `M${x1} ${y1}C${x1 + k} ${y1} ${x2 - k} ${y2} ${x2} ${y2}`
}
const wires = [
  [73, 471, 139, 457], [183, 464.5, 455, 455], [183, 464.5, 233, 500.5], [277, 501, 331, 497], [277, 501, 428, 608.5],
  [269, 557.5, 331, 510], [376, 504, 399, 512.5], [441, 506, 455, 468], [441, 506, 512, 542.5], [441, 506, 682, 697.5],
  [441, 506, 428, 621], [497, 553.5, 512, 555.5], [557, 549, 583, 556], [629, 564.5, 654, 568.5], [698, 561.5, 727, 564],
  [500, 455, 692, 462], [636, 500, 692, 487.5],
].map(wire)
const greenWire = wire([473, 615, 677, 927])
const dots = [[39, 471], [73.5, 471], [268.5, 557.5], [635.5, 500], [434.5, 553.5], [497, 553.5], [727.5, 564], [831.5, 564], [682, 697.5], [864.5, 697.5], [677.5, 927.5], [879.5, 927.5]]
const vLines = Array.from({ length: 10 }, (_, i) => 50.5 + i * 96)
const hLines = Array.from({ length: 29 }, (_, i) => 221.5 + i * 32)
const counts = ['51', '48', '44', '41', '38', '34', '31'].map((v, i) => ({ v, y: 619.5 + i * 22.4, i }))
const spacing = ['10.122298', '10.055294', '10.27024', '10.202431', '10.120063', '10.003956', '10.148911', '10.095298', '10.034203', '10.219428'].map((v, i) => ({ v, y: 823.5 + i * 22.4, i: i + 3 }))

/* Rhino viewport: 17 offset rows of seats */
const rows = Array.from({ length: 17 }, (_, i) => {
  const lx = 1095 + 11.77 * i
  const ly = 537.3 + 19.22 * i
  const top = 427.4 + 22.5 * i
  const half = 1472.2 - lx
  const sag = ly - top
  const R = (half * half + sag * sag) / (2 * sag)
  const th = Math.asin(half / R)
  const n = Math.floor((2 * th * R) / 14.98)
  const pts = Array.from({ length: n + 1 }, (_, k) => {
    const a = -th + (2 * th * k) / n
    return [+(1472.2 + R * Math.sin(a)).toFixed(1), +(top + R - R * Math.cos(a)).toFixed(1)]
  })
  return { pts, line: pts.map((q) => q.join(',')).join(' ') }
})
const grid = Array.from({ length: 41 }, (_, i) => i * 15.035)

const snaps = ['End', 'Near', 'Point', 'Mid', 'Cen', 'Int', 'Perp', 'Tan', 'Quad', 'Knot']
const toggles = ['Project', 'STrack', 'Disable']

const W = 'fill="#fff"'
const tasks = [
  { k: 'stack', s: r(4, 4, 24, 22, 'rx="1" fill="#f2dc8a" stroke="#b89840"') + r(6, 2, 9, 4, 'fill="#fff"') + r(7, 3, 3, 2, 'fill="#2a2"') + r(15, 4, 9, 3, 'fill="#fff"') + r(16, 5, 3, 2, 'fill="#c33"') + r(22, 6, 8, 4, 'fill="#fff"') + r(23, 7, 3, 2, 'fill="#28c"') + r(2, 9, 28, 19, 'rx="1" fill="#f8e8a8" stroke="#c8a850"') + p('M6 30V22Q6 19 9 19H23Q26 19 26 22V30H21V24H11V30Z', 'fill="#8fcdf0" stroke="#4a90c0"') },
  { k: 'stack', s: p('M23 0Q22 3 25 7Q20 8 24 12Q28 16 28 21Q27 31 16 31Q5 31 4 22Q3 14 9 9Q16 5 23 0Z', 'fill="url(#gFire)"') + p('M20 13Q14 17 19 18Q22 20 21 25Q19 30 14 30Q7 29 7 23Q9 17 20 13Z', 'fill="#ef6a12"') + p('M15 22Q11 23 11 26Q13 29 16 27Q15 25 17 23Z', 'fill="#f8a838"') },
  { k: 'bare', s: p('M16 0L19 6V18L24 25L28 26V28H20L18 31H14L12 28H4V26L8 25L13 18V6Z', 'fill="#f4f4f4" stroke="#222"') + p('M16 6V30M13 19L9 26M19 19L23 26', 'stroke="#555"') + p('M4 28H11M21 28H28', 'stroke="#000" stroke-width="2"') + p('M14.500 5L16 1L17.500 5Z', 'fill="#333"') },
  { k: 'bare', s: c(16, 16, 11, 'fill="#b8c0c4"') + p('M9 9L23 23M23 9L9 23', 'stroke="#2b3338" stroke-width="3"') + p('M12 1Q19 0 19 8M20 31Q13 32 13 24M1 12Q1 16 8 16', 'stroke="#2c4a86" stroke-width="3.500" fill="none"') + p('M13 7H25L19 13ZM7 25H19L13 19ZM7 10V22L13 16Z', 'fill="#2c4a86"') + p('M18 14H26V9L33 16L26 23V18H18Z', 'fill="#116c3c"') },
  { s: p('M16 16C10 8 2 9 2 16S10 24 16 16S30 8 30 16S22 24 16 16', 'stroke="#3a8ad8" stroke-width="4.5" fill="none"') + p('M16 16C22 8 30 8 30 16S24 22 19 19', 'stroke="#6a40a8" stroke-width="4.5" fill="none"') },
  { s: c(17, 15, 13, 'fill="#2d74c4"') + p('M14 4Q22 3 24 10Q20 12 15 10Z', 'fill="#9ccdf0"') + p('M3 6Q1 12 1 17Q2 31 16 31Q30 30 31 16Q30 9 27 6Q29 15 24 20Q19 26 13 22Q10 18 14 15L9 13Q8 8 11 6Q6 6 5 10Z', 'fill="#e8641a"') + p('M27 5Q32 14 29 22Q26 29 18 31Q28 24 26 14Z', 'fill="#ffc82e"') },
  { s: p('M9 4L27 3L30 24L22 30H1Z', 'fill="#d8dcd8" stroke="#889"') + p('M9 6L24 5L26 25L2 27Z', 'fill="#62bcd0"') + p('M9 6L24 5L14 18L5 20Z', 'fill="#a8e0ea"') + p('M9 3V7M12 3V7M15 3V7M18 3V7M21 3V7M24 3V7', 'stroke="#555"') },
  { s: p('M4 25H28L30 31H2Z', 'fill="#f58512"') + p('M14 2H18L26 27H6Z', 'fill="#f58512"') + p('M12.5 7H19.5L21 12H11ZM9.5 17H22.5L24 22H8Z', 'fill="#eee"') },
  { s: r(2, 5, 17, 22, 'fill="#f5b82a" stroke="#9a6400" stroke-width="1.5"') + p('M3 15H18', 'stroke="#a06a00"') + r(7, 9, 7, 3, 'fill="#fff" stroke="#555"') + r(7, 19, 7, 3, 'fill="#fff" stroke="#555"') + p('M16 1H28V5H16ZM8 28H29V31H8Z', 'fill="#7ab4ec" stroke="#246"') + p('M24 5V28', 'stroke="#4a90dc" stroke-width="5"') + p('M24 5V28', 'stroke="#cde" stroke-width="5" stroke-dasharray="1 2"') },
  { s: p('M1 16L9 7H15L7 16L15 25H9Z', 'fill="#f6c22c"') + p('M8 7H14L24 25H18Z', 'fill="#8ab84c"') + p('M18 7H24L31 16L24 25L18 18', 'fill="#3c8ac8"') + p('M18 7H25L14 25H7Z', 'fill="#ee5a3a"') },
  { s: `<g transform="translate(2 1) scale(.72)">${p(gearD, 'fill="#efb93e"')}${c(12, 12, 3, 'fill="#666"')}</g><g transform="translate(17 6) scale(.62)">${p(gearD, 'fill="#2ca05c"')}${c(12, 12, 3, 'fill="#444"')}</g><g transform="translate(1 12) scale(.85)">${p(gearD, 'fill="#2276c8"')}${c(12, 12, 3, 'fill="#345"')}</g>` },
  { s: p('M3 12H16V30H3Z', 'fill="#eee" stroke="#777"') + p('M6 16H13M6 19H13M6 22H13M6 25H13', 'stroke="#666"') + t(19, 26, '?', 33, F + ' font-weight="bold" fill="#ffee00" stroke="#222" stroke-width="1.2"') },
  { s: r(2, 3, 27, 26, 'rx="1" fill="#ddd"') + r(3, 4, 26, 26, 'fill="#cf0e12"') + p('M8 26Q16 16 15 9Q14 6 15 6Q17 9 15 14Q17 21 25 21Q26 20 22 19Q14 19 8 26Z', 'fill="none" stroke="#fff" stroke-width="1.5"') },
  { k: 'lit', s: r(0, 0, 32, 32, B) + p('M2 0L7 2L10 8L15 6L14 1L20 5L20 12L31 9L22 21L20 16L13 12L7 16L5 10L1 8Z', 'fill="#a4a4a4" stroke="#ddd" stroke-width=".7"') + p('M2 18L8 16Q16 14 20 18Q24 24 21 31Q15 32 12 26Q9 20 2 22Z', 'fill="#c4c4c4" stroke="#fff" stroke-width=".7"') + p('M10 20Q17 19 19 29Q13 28 10 20Z', 'fill="#777"') + c(6.500, 15, 1.400, 'fill="#d22"') },
  { s: r(6, 2, 24, 26, 'fill="#aaa"') + p('M12 12H30M12 20H30M20 4V28', 'stroke="#eee" stroke-width="2"') + t(11, 23, 'R', 30, F + ' font-weight="bold" fill="#c45ac8" stroke="#5a1a6a"') + r(24, 26, 7, 7, W) + t(27.5, 32, 'A', 7, F + ' font-weight="bold"') },
  { k: 'hot', s: '<ellipse cx="9" cy="9" rx="8" ry="6" transform="rotate(25 9 9)" fill="#d8a820" stroke="#eee" stroke-width="2.500"/><ellipse cx="22" cy="23" rx="8" ry="6" transform="rotate(25 22 23)" fill="#d8a820" stroke="#eee" stroke-width="2.500"/>' + c(11, 7, 5, 'fill="#1c8a98" stroke="#145"') + c(22, 20, 5, 'fill="#1c8a98" stroke="#145"') + c(12, 5, 1.8, 'fill="#7fe0e8"') + c(23, 18, 1.8, 'fill="#7fe0e8"') },
]
const tray = [
  c(8, 8, 5, 'fill="#aab4b8"') + p('M4 4L12 12M12 4L4 12', 'stroke="#222" stroke-width="2"') + p('M6 0H10L8 5ZM6 16H10L8 11ZM0 6V10L5 8Z', 'fill="#4a70b0"') + p('M9 7H12V4L16 8L12 12V9H9Z', 'fill="#127a44"'),
  p('M0 14Q8 10 12 1V14Z', 'fill="#f01010"') + p('M9 7L16 14L10 11Z', 'fill="#10e020"') + p('M9 6V14', 'stroke="#800"'),
  p('M11 0Q6 2 4 6Q1 9 2 12Q3 16 8 16Q14 16 15 11Q15 6 12 6Q10 5 11 0Z', 'fill="#f8a028"') + p('M9 7Q4 10 5 13Q8 16 11 13Q12 11 9 12Q8 10 9 7Z', 'fill="#fff0a0" stroke="#e86010"'),
  c(8, 8, 7, 'fill="#fff"') + p('M4 9A4 4 0 0 1 11 5.500M12 7A4 4 0 0 1 5 10.500', 'fill="none" stroke="#28286a" stroke-width="1.800"') + p('M12 3V7.500H8ZM4 13V8.500H8Z', 'fill="#28286a"'),
  r(1, 1, 14, 14, 'rx="2" fill="#6ab83c" stroke="#9c6"') + p('M4 6L7 3Q12 3 12 8Q12 13 9 13V10H5Z', 'fill="#35402c"'),
  p('M1 5L8 2L13 5V12L6 16L1 13Z', 'fill="#d4d4e4" stroke="#889"') + c(11, 5, 4.5, 'fill="#e8f4ff" stroke="#2878d8" stroke-width="1.5"') + p('M11 2V5H13', 'stroke="#247" fill="none"'),
  p('M2 1V16', 'stroke="#fff" stroke-width="1.5"') + p('M3 2H9V4H15L13 8H8V7H3Z', W),
  p('M2 7H14V14H2Z', 'fill="#777" stroke="#fff" stroke-width="1.5"') + p('M3 6Q8 -2 13 6', 'stroke="#fff" stroke-width="1.3" fill="none"'),
  p('M5 4H15V12H5ZM10 12V15M6 15H14', 'stroke="#fff" stroke-width="1.5" fill="none"') + p('M1 1V4H5V1M3 4V14H6', 'stroke="#fff" stroke-width="1.2" fill="none"'),
  p('M1 6H4L8 2V14L4 10H1Z', W) + p('M10 5Q12 8 10 11M12.5 3Q16 8 12.5 13', 'stroke="#fff" stroke-width="1.2" fill="none"'),
  p('M4 1L8 4L4 6L0 4ZM12 1L16 4L12 6L8 4ZM4 7L8 9L4 12L0 9ZM12 7L16 9L12 12L8 9ZM8 10L12 13L8 15L4 13Z', 'fill="#8fd0ff"') + c(12, 12, 4, 'fill="#1c9c34"') + p('M10 12L12 14L14.5 10', 'stroke="#fff" stroke-width="1.3" fill="none"'),
]
</script>

<template>
  <div class="desktop">
    <svg class="defs" width="0" height="0">
      <defs>
        <linearGradient id="gKey" x2="0" y2="1"><stop offset="0" stop-color="#fafafa" /><stop offset="1" stop-color="#d0d0d0" /></linearGradient>
        <linearGradient id="gRed" x2="0" y2="1"><stop offset="0" stop-color="#c83a18" /><stop offset="1" stop-color="#7c1404" /></linearGradient>
        <linearGradient id="gGrn" x2="0" y2="1"><stop offset="0" stop-color="#2c8c1c" /><stop offset="1" stop-color="#34c428" /></linearGradient>
        <linearGradient id="gFold" x2="0" y2="1"><stop offset="0" stop-color="#b8ec80" /><stop offset="1" stop-color="#4ea41c" /></linearGradient>
        <linearGradient id="gFire" x2="0" y2="1"><stop offset="0" stop-color="#f07818" /><stop offset="1" stop-color="#ffd040" /></linearGradient>
        <linearGradient id="gComp" x2="0" y2="1"><stop offset="0" stop-color="#bdbbcb" /><stop offset=".5" stop-color="#a3a1b3" /><stop offset="1" stop-color="#8d8b9e" /></linearGradient>
        <linearGradient id="gLight" x2="0" y2="1"><stop offset="0" stop-color="#f2f2f2" /><stop offset="1" stop-color="#cbcbcb" /></linearGradient>
        <linearGradient id="gDark"><stop offset="0" stop-color="#2a2a2a" /><stop offset=".5" stop-color="#4a4a4a" /><stop offset="1" stop-color="#2e2e2e" /></linearGradient>
        <linearGradient id="gShade" x2="0" y2="1"><stop offset="0" stop-color="#000" stop-opacity="0" /><stop offset="1" stop-color="#000" stop-opacity=".34" /></linearGradient>
        <linearGradient id="gWire" gradientUnits="userSpaceOnUse" x1="473" y1="615" x2="560" y2="850"><stop offset="0" stop-color="#9c9a92" /><stop offset="1" stop-color="#7fc43c" /></linearGradient>
        <radialGradient id="gBall" cx=".35" cy=".3"><stop offset="0" stop-color="#fff" /><stop offset="1" stop-color="#bbb" /></radialGradient>
        <radialGradient id="gBlk" cx=".4" cy=".3"><stop offset="0" stop-color="#888" /><stop offset=".4" stop-color="#222" /><stop offset="1" stop-color="#000" /></radialGradient>
        <radialGradient id="gBlue" cx=".35" cy=".3"><stop offset="0" stop-color="#cfe4ff" /><stop offset=".4" stop-color="#2460d8" /><stop offset="1" stop-color="#041c6c" /></radialGradient>
        <radialGradient id="gBlue2" cx=".35" cy=".3"><stop offset="0" stop-color="#c4d0ff" /><stop offset="1" stop-color="#4a68d8" /></radialGradient>
        <radialGradient id="gOrb" cx=".5" cy=".9"><stop offset="0" stop-color="#38d0f8" /><stop offset=".5" stop-color="#1a6cac" /><stop offset="1" stop-color="#7d99ac" /></radialGradient>
        <radialGradient id="gNav" cx=".5" cy=".5"><stop offset="0" stop-color="#eee" /><stop offset=".7" stop-color="#d8d8d8" /><stop offset="1" stop-color="#aaa" /></radialGradient>
        <pattern id="gHatch" width="3" height="3" patternUnits="userSpaceOnUse"><rect width="3" height="3" fill="#eee" /><path d="M0 3L3 0" stroke="#000" stroke-width=".8" /></pattern>
        <pattern id="gDiag" width="5" height="5" patternUnits="userSpaceOnUse"><path d="M-1 1L1 -1M0 5L5 0M4 6L6 4" stroke="#bebbb2" stroke-width="1.3" /></pattern>
        <pattern id="gDots" x="1111" y="279" width="3.007" height="3.007" patternUnits="userSpaceOnUse"><rect width="1" height="1" fill="#a2a2a2" opacity=".75" /></pattern>
      </defs>
    </svg>

    <!-- Grasshopper -->
    <section class="win gh">
      <header class="title"><span>Grasshopper - Seating Curve</span>
        <i class="blur b1"></i><i class="blur b2"></i><i class="blur b3"></i><i class="blur b4"></i>
      </header>
      <div class="caps">
        <b class="cap"><svg viewBox="0 0 28 18"><rect x="9" y="9.500" width="11" height="4" rx="1" fill="#fff" stroke="#444c5a" /></svg></b>
        <b class="cap"><svg viewBox="0 0 27 18"><path d="M8.500 4.500H19.500V14.500H8.500ZM12 8V11H16V8Z" fill="#fff" stroke="#444c5a" fill-rule="evenodd" /></svg></b>
        <b class="cap wide"><svg viewBox="0 0 46 18"><path d="M18 4.500H21.500L23.500 7L25.500 4.500H29L25.500 9.500L29 14.500H25.500L23.500 12L21.500 14.500H18L21.500 9.500Z" fill="#fff" stroke="#444c5a" /></svg></b>
      </div>
      <div class="client">
        <nav class="gmenu">
          <span v-for="m in ghMenu" :key="m[0]" :style="{ width: m[1] + 'px' }">{{ m[0] }}</span>
          <em>Seating Curve</em>
        </nav>
        <div class="gtabs">
          <span v-for="m in ghTabs" :key="m[0]" :class="{ on: m[0] === 'Math' }" :style="{ width: m[1] + 'px' }">{{ m[0] }}</span>
        </div>
        <div class="ribbon">
          <div v-for="q in panels" :key="q.name" class="panel">
            <div class="groups">
              <div v-for="(g, gi) in q.groups" :key="gi" class="group" :class="'c' + q.cols[gi]">
                <svg v-for="n in g" :key="n" viewBox="0 0 24 24" v-html="ribbonIcons[n]"></svg>
              </div>
            </div>
            <div class="plabel"><span>{{ q.name }}</span><svg viewBox="0 0 8 8"><path d="M4 0V7M1 4L4 7L7 4M1 4H7" stroke="#999" fill="#888" /></svg></div>
          </div>
        </div>
        <div class="ctool">
          <svg viewBox="0 0 24 24" v-html="gh.open"></svg>
          <svg class="m6" viewBox="0 0 24 24" v-html="gh.save"></svg>
          <i class="vs"></i>
          <div class="combo"><span>64%</span><b></b></div>
          <svg class="m4" viewBox="0 0 24 24" v-html="gh.zoom"></svg><b class="dd"></b>
          <svg class="m7" viewBox="0 0 24 24" v-html="gh.eye"></svg><b class="dd"></b>
          <svg class="m6" viewBox="0 0 24 24" v-html="gh.pen"></svg>
          <div class="right">
            <svg viewBox="0 0 24 24" v-html="gh.none"></svg>
            <svg viewBox="0 0 24 24" v-html="gh.wire"></svg>
            <div class="picked"><svg viewBox="0 0 24 24" v-html="gh.shade"></svg></div>
            <i class="vs"></i>
            <svg viewBox="0 0 24 24" v-html="gh.sel"></svg>
            <svg viewBox="0 0 24 24" v-html="gh.half"></svg>
          </div>
        </div>
        <svg class="canvas" viewBox="10 196 940 932">
          <rect x="10" y="196" width="940" height="932" fill="#d4d0c8" />
          <rect x="10" y="196" width="940" height="185" fill="#cdcac1" />
          <rect x="10" y="196" width="940" height="185" fill="url(#gDiag)" opacity=".6" />
          <g stroke="#000" stroke-opacity=".17">
            <path v-for="x in vLines" :key="x" :d="`M${x} 196V1128`" />
            <path v-for="y in hLines" :key="y" :d="`M10 ${y}H950`" />
          </g>
          <rect x="10" y="360" width="940" height="21" fill="url(#gShade)" />
          <path d="M10 381.500H950" stroke="#000" />
          <path d="M61 249Q60 259 47 262L43 264L39 262L31 259L29 265L24 268V263L28 258" fill="#000" />
          <circle cx="40.500" cy="241.500" r="20" fill="url(#gNav)" stroke="#555" />
          <circle cx="40.500" cy="241.500" r="18.700" fill="none" stroke="#fff" stroke-width="1.500" />
          <path d="M48 224L54 228L48 231ZM25 228L30 235L23 235ZM27 256L34 252L34 259ZM52 249L59 248L55 255Z" fill="#fff" />

          <g fill="none" stroke="#2a2a26" stroke-opacity=".75" stroke-width="1.700">
            <path v-for="(w, i) in wires" :key="i" :d="w" />
          </g>
          <path :d="greenWire" fill="none" stroke="url(#gWire)" stroke-width="1.700" />
          <g fill="#aaa69e" stroke="#555" stroke-width="1.200">
            <circle v-for="(d, i) in dots" :key="i" :cx="d[0]" :cy="d[1]" r="2.200" />
            <template v-for="(q, i) in comps" :key="i">
              <circle v-for="z in q.i" :key="'i' + z[0]" :cx="q.x - 0.500" :cy="z[1]" r="2.200" />
              <circle v-for="z in q.o" :key="'o' + z[0]" :cx="q.x + q.w + 0.500" :cy="z[1]" r="2.200" />
            </template>
          </g>
          <g v-for="(q, i) in comps" :key="'c' + i">
            <rect :x="q.x" :y="q.y" :width="q.w" :height="q.h" rx="1.500" :fill="q.light ? 'url(#gLight)' : 'url(#gComp)'" stroke="#3c3b44" stroke-width="1.200" />
            <rect :x="q.l" :y="q.y + 1.500" :width="q.lw" :height="q.h - 3" rx="2" fill="url(#gDark)" stroke="#111" />
            <text class="cn" :transform="`translate(${q.l + q.lw / 2 + 3} ${q.y + q.h / 2}) rotate(-90)`">{{ q.n }}</text>
            <text v-for="z in q.i" :key="z[0]" class="pt" :x="(q.x + q.l) / 2 + 0.500" :y="z[1] + 2.500">{{ z[0] }}</text>
            <text v-for="z in q.o" :key="'o' + z[0]" class="pt" :x="q.l + q.lw + 4.500" :y="z[1] + 2">{{ z[0] }}</text>
          </g>
          <rect x="40.500" y="464.500" width="32" height="13" rx="1.500" fill="url(#gComp)" stroke="#3c3b44" />
          <text class="faint" x="57" y="473.500">Crv</text>

          <g>
            <rect x="454.500" y="490" width="45" height="9.500" fill="#f05050" stroke="#111" />
            <path d="M473 490L476.500 487L480 490" fill="#f05050" />
            <text class="tag red" x="477" y="496.500" textLength="40">43ms (91%)</text>
            <rect x="695.500" y="497" width="37" height="9.500" fill="#eee" stroke="#111" />
            <path d="M711 497L714.500 493.500L718 497" fill="#eee" />
            <text class="tag" x="713.500" y="503.500" textLength="33">2ms (5%)</text>
          </g>

          <g>
            <rect x="143.500" y="551.500" width="124" height="12.500" rx="1.500" fill="url(#gLight)" stroke="#333" />
            <rect x="143.500" y="551.500" width="46.500" height="12.500" rx="1.500" fill="url(#gComp)" stroke="#333" />
            <text class="faint" x="167" y="560">desSpacing</text>
            <path d="M196.500 555V559M260.500 555V559M196.500 557.500H205M234 557.500H260M243 556V557.500M252 556V557.500" stroke="#999" />
            <text class="val" x="219" y="559.500" textLength="26">10.0000</text>
            <circle cx="237.500" cy="557.500" r="2.200" fill="#fff" stroke="#000" stroke-width="1.300" />
            <rect x="509.500" y="493.500" width="125" height="12.500" rx="1.500" fill="url(#gLight)" stroke="#333" />
            <rect x="509.500" y="493.500" width="48" height="12.500" rx="1.500" fill="url(#gComp)" stroke="#333" />
            <text class="faint" x="533" y="502">Circle Radius</text>
            <path d="M563.500 497V501M627.500 497V501M563.500 499.500H587M620 499.500H627M570 498V499.500M577 498V499.500" stroke="#999" />
            <text class="val" x="600" y="501.500" textLength="22">4.1380</text>
            <circle cx="617" cy="500" r="2.200" fill="#fff" stroke="#000" stroke-width="1.300" />
          </g>

          <g class="yel">
            <rect x="435.500" y="543" width="60.500" height="21.500" rx="1.500" fill="#fff655" />
            <rect x="436" y="543.500" width="60" height="11.500" fill="#ece553" />
            <rect x="491" y="544" width="4.500" height="19" rx="1.500" fill="#b5af42" />
            <path d="M444 544V564" stroke="#d8d048" />
            <text x="481.500" y="551" class="mono">{0}</text><text x="439.500" y="561.500" class="mono">0</text><text x="446" y="561.500" class="mono">1</text>
            <rect x="435.500" y="543" width="60.500" height="21.500" rx="1.500" class="edge" />

            <rect x="728.500" y="532" width="102" height="64" rx="1.500" fill="#fff655" />
            <rect x="728.500" y="532" width="102" height="12.500" fill="#ccc648" />
            <rect x="729" y="545" width="101" height="11" fill="#ece553" />
            <path d="M737.500 545V595" stroke="#e0d94c" /><path d="M728.500 544.500H830.500" stroke="#444420" />
            <text class="head" x="779.500" y="540.500" textLength="39">Total Seats</text>
            <text x="816.500" y="551.500" class="mono">{0}</text><text x="733" y="563" class="mono">0</text><text x="739" y="563" class="mono s">696.0</text>
            <rect x="728.500" y="532" width="102" height="64" rx="1.500" class="edge" />

            <rect x="683" y="607" width="180.500" height="181.500" rx="1.500" fill="#fff655" />
            <g v-for="q in counts" :key="q.i">
              <rect x="683" :y="q.y" width="180" height="11.500" fill="#ece553" />
              <path :d="`M683 ${q.y}H863`" stroke="#b8b248" />
              <text x="845.500" :y="q.y + 7.500" class="mono">{0;{{ q.i }}}</text>
              <text x="687.500" :y="q.y + 18.500" class="mono">0</text><text x="693" :y="q.y + 18.500" class="mono s">{{ q.v }}</text>
            </g>
            <rect x="683" y="776" width="180" height="12" fill="#ece553" /><path d="M683 776H863" stroke="#b8b248" />
            <text x="845.500" y="783.500" class="mono">{0;7}</text>
            <path d="M692 620V788" stroke="#e0d94c" />
            <rect x="683" y="607" width="180.500" height="12" fill="#ccc648" /><path d="M683 619H863" stroke="#55521f" stroke-width="1.500" />
            <rect x="858" y="619.500" width="5" height="74.500" rx="2" fill="#8a862e" />
            <text class="head" x="772.500" y="615.500" textLength="25">Counts</text>
            <rect x="683" y="607" width="180.500" height="181.500" rx="1.500" class="edge" />
          </g>
          <g class="grn">
            <rect x="678.500" y="803.500" width="200" height="248" rx="1.500" fill="#9aff36" />
            <text x="683" y="820.500" class="mono">0</text><text x="688.500" y="820.500" class="mono s">10.180164</text>
            <g v-for="q in spacing" :key="q.i">
              <rect x="679" :y="q.y" width="199" height="13" fill="#8cea31" />
              <path :d="`M679 ${q.y}H878`" stroke="#63a824" />
              <text x="860" :y="q.y + 8" class="mono">{0;{{ q.i }}}</text>
              <text x="683" :y="q.y + 19" class="mono">0</text><text x="688.500" :y="q.y + 19" class="mono s">{{ q.v }}</text>
            </g>
            <path d="M679 1047.500H878" stroke="#63a824" /><path d="M687.500 816V1051" stroke="#7fd42c" />
            <rect x="678.500" y="803.500" width="200" height="12" fill="#7bd42b" /><path d="M679 815.500H878" stroke="#264d0e" />
            <rect x="873.500" y="853" width="5" height="145" rx="2" fill="#55991d" />
            <text class="head" x="778" y="811.500" textLength="55">Actual Spacing</text>
            <rect x="678.500" y="803.500" width="200" height="248" rx="1.500" class="edge" />
          </g>
          <g>
            <rect x="9" y="1100.500" width="35.500" height="26.500" fill="url(#gKey)" stroke="#000" />
            <rect x="38" y="1101" width="6" height="25.500" fill="#aaa" />
            <text class="m01" x="18.500" y="1111">0</text><text class="m01" x="29.500" y="1111">1</text>
            <rect x="19" y="1119.500" width="10" height="4" fill="#0fb457" />
            <path d="M14 1121.500H34M18.500 1112V1125M29.500 1112V1125" stroke="#000" />
            <path d="M16 1115H21L18.500 1118ZM27 1115H32L29.500 1118Z" />
          </g>
        </svg>
        <footer class="gstat">
          <svg viewBox="0 0 16 16"><circle cx="8" cy="8" r="7.500" fill="#1560b8" stroke="#123" /><rect x="6" y="2" width="4" height="7" rx="2" fill="none" stroke="#9fe8ff" stroke-width="1.400" /><rect x="6.500" y="10.500" width="3" height="3" fill="none" stroke="#9fe8ff" /></svg>
          <span>Autosave complete (29 seconds ago)</span><em>0.8.0066</em>
          <svg class="grip" viewBox="0 0 12 12"><path d="M9 1h2v2h-2zM5 5h2v2h-2zM9 5h2v2h-2zM1 9h2v2h-2zM5 9h2v2h-2zM9 9h2v2h-2z" fill="#999" /></svg>
        </footer>
      </div>
    </section>

    <!-- Rhinoceros -->
    <section class="win rh">
      <header class="title">
        <svg class="app" viewBox="0 0 16 16"><rect width="16" height="16" /><path d="M1 1L4 3L5 5L8 4L8 6L15 4L11 8L10 12L7 14L5 9L2 6Z" fill="#ddd" /><path d="M4 8L9 7L8 11Z" fill="#666" /></svg>
        <span>Untitled - Rhinoceros (Commercial) - [Top]</span>
      </header>
      <div class="caps">
        <b class="cap"><svg viewBox="0 0 28 18"><rect x="9" y="9.500" width="11" height="4" rx="1" fill="#fff" stroke="#444c5a" /></svg></b>
        <b class="cap"><svg viewBox="0 0 27 18"><path d="M8.500 4.500H19.500V14.500H8.500ZM12 8V11H16V8Z" fill="#fff" stroke="#444c5a" fill-rule="evenodd" /></svg></b>
        <b class="cap wide"><svg viewBox="0 0 46 18"><path d="M18 4.500H21.500L23.500 7L25.500 4.500H29L25.500 9.500L29 14.500H25.500L23.500 12L21.500 14.500H18L21.500 9.500Z" fill="#fff" stroke="#444c5a" /></svg></b>
      </div>
      <div class="client">
        <nav class="rmenu"><span v-for="m in rhMenu" :key="m[0]" :style="{ width: m[1] + 'px' }">{{ m[0] }}</span></nav>
        <div class="rbar top"><div class="rtools"><i class="gripv"></i>
          <span v-for="(s, i) in rhTop" :key="i" class="tb" :class="{ fly: i === 2 || i === 3 || i === 8 || i > 14 }"><svg viewBox="0 0 24 24" v-html="s"></svg></span>
        </div></div>
        <div class="cmd">
          <i class="gripv"></i>
          <div class="cmdmain">
            <div class="hist">
              <div class="lines">
                <p>Select curve to offset ( Distance=15&nbsp; Corner=Sharp&nbsp; ThroughPoint&nbsp; Tolerance=0.01&nbsp; BothSides ):</p>
                <p>Side to offset ( Distance=15&nbsp; Corner=Sharp&nbsp; ThroughPoint&nbsp; Tolerance=0.01&nbsp; BothSides ):</p>
                <p>Curve offset into one open curve.</p>
                <p>Curve or Edge to reference ( Mode=Reference ):</p>
                <p>Curve or Edge to reference. Press Enter when done ( Mode=Reference ):</p>
              </div>
              <div class="vscroll"><b class="up"></b><i></i><b class="dn"></b></div>
            </div>
            <div class="prompt"><strong>Command:</strong>
              <div class="spin"><svg viewBox="0 0 14 16"><path d="M.5 .500H13.500V7H.500ZM.500 9H13.500V15.500H.500Z" fill="#f4f6fa" stroke="#99a" /><path d="M4.500 5H9.500L7 2.500ZM4.500 11H9.500L7 13.500Z" fill="#4a62a8" /></svg></div>
              <div class="hs"><svg viewBox="0 0 44 16"><path d="M10 4V12L6 8ZM35 4V12L39 8Z" fill="#333" /></svg></div>
            </div>
          </div>
        </div>
        <div class="rbar dim"><div class="rtools"><i class="gripv"></i>
          <span v-for="(s, i) in rhDim" :key="i" class="tb" :class="{ fly: i === 18 }"><svg viewBox="0 0 24 24" v-html="s"></svg></span>
        </div></div>
        <div class="work">
          <aside>
            <div class="sidegrid">
              <div v-for="col in 2" :key="col" class="scol"><i class="griph"></i>
                <span v-for="n in sideRows" :key="n" class="tb" :class="{ fly: (n > 0 && n !== 8 && n < 8) || (col === 1 && n === 10) || (col === 2 && (n === 0 || n === 11 || n === 12)) || n === 14 }"><svg viewBox="0 0 24 24" v-html="rhSide[n * 2 + col - 1]"></svg></span>
              </div>
            </div>
          </aside>
          <svg class="view" viewBox="1026 215 886 893">
            <rect x="1026" y="215" width="886" height="893" fill="#9f9f9f" />
            <rect x="1111" y="279" width="602" height="602" fill="#979797" />
            <rect x="1111" y="279" width="602" height="602" fill="url(#gDots)" />
            <g stroke="#8d8d8d" shape-rendering="crispEdges">
              <path v-for="g in grid" :key="g" :d="`M${1111.500 + g} 279V881M1111 ${279.500 + g}H1713`" />
            </g>
            <g shape-rendering="crispEdges"><path d="M1412.500 279V580" stroke="#1f8a1f" /><path d="M1412 580.500H1713" stroke="#8c2a2a" /></g>
            <g fill="none">
              <template v-for="(w, i) in rows" :key="i">
                <g stroke="#a00000" shape-rendering="crispEdges"><circle v-for="(z, k) in w.pts" :key="k" :cx="z[0]" :cy="z[1]" r="6.200" /></g>
                <polyline :points="w.line" stroke="#000" shape-rendering="crispEdges" />
              </template>
            </g>
            <rect x="1026" y="215" width="40" height="18" fill="#9ab3d1" />
            <text class="vt" x="1034" y="228" textLength="23">Top</text>
            <path d="M1062.500 1042V1072.500H1092" fill="none" stroke="#5c5c5c" />
            <text class="ax" x="1064" y="1044">y</text><text class="ax" x="1094" y="1074">x</text>
          </svg>
        </div>
        <div class="osnap">
          <i class="gripv"></i>
          <label v-for="s in snaps" :key="s" class="os"><b :class="{ ck: s === 'End' }"><svg v-if="s === 'End'" viewBox="0 0 11 11"><path d="M2 5L4.500 9L9 2" fill="none" stroke="#3c4f9a" stroke-width="2" /></svg></b>{{ s }}</label>
          <div class="togs"><label v-for="s in toggles" :key="s"><b :class="{ dn: s !== 'Disable' }"></b>{{ s }}</label></div>
        </div>
        <footer class="rstat">
          <span class="cp">CPlane</span><span class="co">x -73.42</span><span class="co">y -347.64</span><span class="co z">z 0.00</span>
          <span class="ly"><b></b>Default</span>
          <span class="st w46 on">Snap</span><span class="st w46">Ortho</span><span class="st w46">Planar</span><span class="st w46 on">Osnap</span><span class="st rec">Record History</span>
          <svg class="grip" viewBox="0 0 12 12"><path d="M9 1h2v2h-2zM5 5h2v2h-2zM9 5h2v2h-2zM1 9h2v2h-2zM5 9h2v2h-2zM9 9h2v2h-2z" fill="#ccc" /></svg>
        </footer>
      </div>
    </section>

    <!-- taskbar -->
    <div class="taskbar">
      <div class="orb"><svg viewBox="0 0 40 40"><circle cx="20" cy="20" r="18.500" fill="url(#gOrb)" stroke="#0c3048" /><path d="M11 11Q15 8 19 10L17 18Q13 16 9 19Z" fill="#e8602c" /><path d="M20.500 10.500Q25 13 30 10L28 18Q23 20 18.500 18Z" fill="#84c03c" /><path d="M8.500 21Q12 18 16.500 20L14.500 28Q11 26 7.500 28Z" fill="#4aa4e8" /><path d="M18 20Q23 22 27.500 20L25.500 28Q20 31 16 28Z" fill="#fcc83c" /><path d="M4 14Q10 2 20 2T36 14Q20 20 4 14Z" fill="#fff" opacity=".25" /></svg></div>
      <div v-for="(q, i) in tasks" :key="i" class="task" :class="q.k"><svg viewBox="0 0 32 32" v-html="q.s"></svg></div>
      <div class="tray">
        <svg class="tri" viewBox="0 0 8 5"><path d="M0 4L4 0L8 4Z" fill="#fff" /></svg>
        <svg v-for="(s, i) in tray" :key="i" viewBox="0 0 16 16" v-html="s"></svg>
      </div>
      <div class="clock"><span>12:16 PM</span><span>3/29/2012</span></div>
      <div class="peek"></div>
    </div>
  </div>
</template>

<style>
body { background: #1a242e; overflow: hidden; }
</style>

<style scoped>
* { box-sizing: border-box; }
.desktop { position: relative; width: 1920px; height: 1200px; overflow: hidden; background: #10161c; font-family: "Open Sans", "Noto Sans", sans-serif; font-size: 12px; letter-spacing: -0.5px; color: #000; white-space: nowrap; }
.defs { position: absolute; }
svg { display: block; }
.win { position: absolute; top: 0; height: 1159px; width: 960px; border: 1px solid #1a222c; border-radius: 7px; padding: 0 7px; overflow: hidden; box-shadow: inset 0 0 0 1px rgba(255,255,255,.6); }
.gh { left: 0; background: linear-gradient(90deg, transparent 940px, #b9d4f0 952px), linear-gradient(#d3fcfd 0, #dcfafc 550px, #a9bedc 620px, #8ea6cc 700px, #54657c 930px, #2a3642 1060px, #222d38 1159px); background-size: 100% 600px, 100% 100%; background-repeat: no-repeat; }
.rh { left: 960px; background: linear-gradient(100deg, #ddebf8 0, #bcd8f2 150px, transparent 300px) 0 0/100% 29px no-repeat, linear-gradient(#9dc5ee 0, #a4c4e8 500px, #6e86a8 700px, #3c4c60 950px, #2c3a4a 1159px); }
.title { height: 28px; display: flex; align-items: center; font-size: 12.5px; letter-spacing: -0.47px; }
.rh .title { gap: 5px; letter-spacing: -0.42px; }
.app { width: 16px; height: 16px; }
.blur { position: absolute; top: 12px; width: 22px; height: 15px; border-radius: 8px; background: #6f9ac4; opacity: .45; filter: blur(4px); }
.title span { position: relative; z-index: 1; }
.b1 { left: 100px; } .b2 { left: 176px; background: #b8c890; } .b3 { left: 255px; background: #4a86b8; } .b4 { left: 326px; background: #88c850; opacity: .7; }
.caps { position: absolute; right: 6px; top: 0; display: flex; height: 19px; border: 1px solid #8593a2; border-top: 0; border-radius: 0 0 4px 4px; overflow: hidden; }
.cap { width: 28px; border-right: 1px solid #94a4b4; background: linear-gradient(#fff6, #fff2); }
.cap:nth-child(2) { width: 27px; }
.cap.wide { width: 46px; border-right: 0; }
.cap svg { height: 18px; width: 100%; }
.rh .cap { background: linear-gradient(#d0e0f2, #a8bfdc 45%, #86a2c6 50%, #a0bcd8); }
.rh .cap.wide { background: linear-gradient(#e0a69c, #d0705e 45%, #bd3520 50%, #c4604c); }
.rh .caps { border-color: #3c4a60; }
.client { width: 944px; height: 1124px; border-top: 1px solid #66727c; display: flex; flex-direction: column; background: #f0f0f0; border-right: 1px solid #777; }
.rh .client { width: 945px; }

.gmenu { height: 24px; flex: none; display: flex; align-items: center; padding-left: 14px; font-size: 11.5px; letter-spacing: -0.6px; background: linear-gradient(90deg, #efefef, #fdfdfd); }
.gmenu em { margin-left: auto; font-style: normal; padding-right: 10px; letter-spacing: -0.4px; }
.gtabs { height: 22px; flex: none; display: flex; padding-left: 11px; background: #efefef; color: #6c6c6c; font-size: 11.5px; line-height: 23px; letter-spacing: -0.15px; }
.gtabs span:first-child { width: 58px; }
.gtabs .on { color: #000; background: #fff; border: 1px solid #999; border-bottom: 0; border-radius: 6px 6px 0 0; margin-left: -12px; padding-left: 10px; margin-right: 11px; line-height: 18px; }
.ribbon { height: 88px; flex: none; display: flex; gap: 4px; padding: 2px 0 0 3px; border-top: 1px solid #999; border-bottom: 2px solid #888; border-radius: 6px 6px 0 0; background: linear-gradient(#dcdcdc, #f2f2f2 80%); }
.panel { height: 73px; border: 1px solid #777; border-radius: 4px; overflow: hidden; background: linear-gradient(#dcdcdc, #c9c9c9 40%, #dedede); }
.groups { display: flex; padding: 1px 1px 0; height: 58px; }
.group { display: grid; grid-auto-rows: 28px; justify-items: center; align-items: center; }
.group svg { width: 24px; height: 24px; overflow: visible; filter: drop-shadow(1px 1px 1px rgba(0,0,0,.25)); }
.c1 { grid-template-columns: 28px; } .c2 { grid-template-columns: 28px 28px; } .c3 { grid-template-columns: 28px 28px 28px; }
.group + .group { position: relative; margin-left: 10px; }
.group + .group::before { content: ""; position: absolute; left: -6px; top: 2px; height: 52px; border-left: 1px solid #aaa; border-right: 1px solid #eee; }
.plabel { height: 14px; background: linear-gradient(#333, #151515); color: #fff; display: flex; align-items: center; justify-content: center; position: relative; font-size: 11px; letter-spacing: -0.15px; line-height: 12px; padding-bottom: 2px; }
.plabel span { margin-right: 4px; }
.plabel svg { position: absolute; right: 2px; top: 2px; width: 8px; height: 8px; }

.ctool { height: 32px; flex: none; margin: 0 2px; padding: 0 2px 1px 4px; display: flex; align-items: center; background: linear-gradient(#fff, #f0f0f0); }
.ctool svg { width: 24px; height: 24px; }
.m6 { margin-left: 6px; } .m7 { margin-left: 8px; } .m4 { margin-left: 4px; }
.vs { width: 1px; height: 21px; background: #bbb; margin: 0 4px 0 7px; }
.combo { width: 70px; height: 24px; border: 1px solid #d6d8e4; background: #fff; display: flex; align-items: center; justify-content: space-between; padding: 0 4px 0 2px; font-size: 12.5px; letter-spacing: 0; }
.combo b, .dd { border: 4px solid transparent; border-top-color: #000; border-bottom: 0; }
.dd { border-width: 3px; border-bottom: 0; margin-left: 4px; }
.ctool .right { margin-left: auto; display: flex; align-items: center; gap: 4px; padding-right: 10px; }
.right svg:first-child { margin-right: 1px; }
.right .vs { margin: 0 4px; }
.right .vs + svg { margin-right: 1px; }
.picked { width: 28px; height: 28px; border: 1px solid #3399ff; display: grid; place-items: center; }
.canvas { flex: none; width: 940px; height: 932px; margin-left: 2px; }
.gstat { flex: 1; display: flex; align-items: center; padding: 0 2px 0 3px; border-top: 2px solid #fff; background: linear-gradient(90deg, #f2f2f2, #fcfcfc); gap: 3px; font-size: 11.5px; letter-spacing: -0.55px; }
.gstat svg { width: 16px; height: 16px; }
.gstat em { margin-left: auto; font-style: normal; color: #777; letter-spacing: -0.3px; }
.gstat .grip, .rstat .grip { width: 12px; height: 12px; align-self: flex-end; margin-bottom: 3px; }

.cn { font: 600 8.3px "Open Sans", sans-serif; fill: #c4c4c4; text-anchor: middle; letter-spacing: 0; }
.pt { font: 7px "Open Sans", sans-serif; fill: #63616e; text-anchor: middle; letter-spacing: 0; }
.faint { font: 6px "Open Sans", sans-serif; fill: #8c8aa0; text-anchor: middle; letter-spacing: 0; }
.val { font: 6.5px "Liberation Sans", sans-serif; fill: #111; text-anchor: middle; letter-spacing: 0; }
.tag { font: 6px "DejaVu Sans Mono", monospace; fill: #888; text-anchor: middle; letter-spacing: 0; }
.tag.red { fill: #a82c2c; }
.mono { font: 6.5px "DejaVu Sans Mono", monospace; text-anchor: middle; letter-spacing: .3px; fill: #b8b23e; }
.mono.s { text-anchor: start; }
.grn .mono { fill: #6cba28; }
.head { font: italic bold 8px "Liberation Serif", serif; text-anchor: middle; letter-spacing: 0; fill: #222208; }
.edge { fill: none; stroke: #3c3c20; stroke-width: 1.2; }
.m01 { font: 9px "Open Sans", sans-serif; text-anchor: middle; letter-spacing: 0; }
.vt { font: bold 13px "Liberation Sans", sans-serif; letter-spacing: 0; }
.ax { font: bold 11px "Liberation Mono", monospace; fill: #5c5c5c; letter-spacing: 0; }

.rmenu { height: 21px; flex: none; display: flex; align-items: center; padding: 0 0 1px 7px; background: linear-gradient(#fff 0, #f4f6fb 30%, #d6dcee 40%, #e0e6f4); border-bottom: 1px solid #b4bac8; letter-spacing: -0.2px; }
.rbar { flex: none; display: flex; background: #f0f0f0; border-top: 1px solid #999; }
.rbar.top { height: 31px; }
.rbar.dim { height: 29px; }
.rtools { display: flex; align-items: center; border-right: 1px solid #999; background: linear-gradient(#f4f4f4, #d4d4d4); padding: 0 1px 0 3px; }
.gripv { width: 3px; height: 24px; flex: none; margin-right: 1px; background: radial-gradient(circle at 1px 1px, #aaa 1px, transparent 1.5px) 0 0/3px 4px; }
.tb { width: 28px; height: 28px; flex: none; display: grid; place-items: center; position: relative; }
.tb svg { width: 24px; height: 24px; overflow: visible; }
.tb.fly::after { content: ""; position: absolute; right: 1px; bottom: 1px; width: 5px; height: 5px; background: linear-gradient(135deg, transparent 45%, #888 45%, #888 55%, #fff 55%); }
.rtools .tb:last-child { margin-right: 1px; }
.cmd { height: 104px; flex: none; display: flex; border-top: 1px solid #999; padding: 0 2px 7px 3px; background: #d4d4d4; }
.cmd .gripv { height: 96px; margin-right: 2px; }
.cmdmain { flex: 1; background: #fff; display: flex; flex-direction: column; font: 12.1px "Liberation Sans", Arial, sans-serif; letter-spacing: 0; }
.hist { height: 77px; border-bottom: 1px solid #000; display: flex; justify-content: space-between; }
.lines { padding: 1px 0 0 1px; }
.lines p { margin: 0; line-height: 15px; }
.vscroll { width: 16px; background: #f2f2f2; display: flex; flex-direction: column; align-items: center; padding: 8px 0 4px; }
.vscroll b { border: 3px solid transparent; }
.vscroll .up { border-bottom-color: #444; border-top: 0; }
.vscroll .dn { border-top-color: #444; border-bottom: 0; margin-top: auto; }
.vscroll i { width: 15px; height: 15px; margin-top: 32px; border: 1px solid #999; border-radius: 2px; background: linear-gradient(90deg, #fafafa, #d0d0d4); }
.prompt { flex: 1; display: flex; align-items: center; padding: 0 0 1px 1px; }
.prompt strong { flex: 1; padding-bottom: 1px; }
.spin { width: 14px; height: 16px; }
.hs { width: 62px; height: 18px; background: #f0f0f0; margin-left: 1px; }
.hs svg { width: 44px; height: 16px; }
.work { flex: none; height: 893px; display: flex; }
aside { width: 58px; flex: none; border-bottom: 1px solid #999; background: #f0f0f0; }
.sidegrid { display: flex; height: 429px; border-bottom: 1px solid #999; }
.scol { width: 30px; background: linear-gradient(90deg, #f6f6f6, #d2d2d2); border-right: 1px solid #999; padding-top: 5px; }
.scol + .scol { width: 28px; border-right: 0; }
.griph { display: block; width: 25px; height: 3px; margin: 0 2px 1px 3px; background: radial-gradient(circle at 1px 1px, #bbb 1px, transparent 1.5px) 0 0/4px 3px; }
.view { width: 886px; height: 893px; flex: none; }
.osnap { height: 23px; flex: none; display: flex; align-items: center; padding-left: 3px; border-bottom: 1px solid #999; background: #f0f0f0; }
.osnap .gripv { height: 18px; margin-right: 5px; }
.osnap label { display: flex; align-items: center; gap: 5px; }
.os { width: 56px; }
.os b { width: 13px; height: 13px; border: 1px solid #8e8f8f; background: linear-gradient(135deg, #c8ccd4, #fff); box-shadow: inset 0 0 0 1px #f4f4f4; }
.os b svg { width: 11px; height: 11px; }
.togs { display: flex; margin-left: -1px; height: 22px; border-right: 1px solid #999; }
.togs label { width: 56px; gap: 4px; letter-spacing: -0.6px; }
.togs label:last-child { width: 61px; }
.togs b { width: 15px; height: 15px; flex: none; border: 1px solid #777; border-radius: 2px; background: linear-gradient(#fff, #ddd); }
.togs b.dn { background: #8c8c8c; border-color: #2c628b; box-shadow: inset 0 0 0 1px #a8b8c4; }
.rstat { flex: 1; display: flex; align-items: stretch; line-height: 19px; margin-top: 1px; border-top: 1px solid #999; background: #f1eeed; letter-spacing: -0.4px; }
.cp { width: 56px; padding-left: 9px; border-right: 1px solid #ccc; margin-right: 4px; }
.co { width: 88px; } .z { width: 177px; }
.ly { width: 168px; display: flex; align-items: center; gap: 2px; border-right: 1px solid #ccc; } .ly b { width: 12px; height: 12px; background: #000; }
.st { border-right: 1px solid #ccc; text-align: center; } .w46 { width: 46px; } .w46.on { font-weight: bold; background: #f8f8f8; }
.rec { width: 109px; } .rstat .grip { margin-left: auto; }

.taskbar { position: absolute; left: 0; top: 1159px; width: 1920px; height: 41px; display: flex; align-items: center; border-top: 1px solid #000; box-shadow: inset 0 1px 0 #778490; background: linear-gradient(rgba(255,255,255,.1), transparent 30%), linear-gradient(90deg, #161c22 0, #1e2931 300px, #1d2a33 1060px, #2a3843 1220px, #1a2630 1320px, #2c3b47 1420px, #16222e 1520px, #28343e 1700px, #1e3044 1920px); }
.orb { width: 60px; padding-left: 7px; flex: none; } .orb svg { width: 40px; height: 40px; }
.task { width: 58px; height: 38px; margin-right: 4px; flex: none; display: grid; place-items: center; border: 1px solid #9aa3aa; border-radius: 3px; background: linear-gradient(135deg, #8d9499 0, #555d64 40%, #333e48 60%, #46525d); box-shadow: inset 0 0 0 1px rgba(255,255,255,.12); }
.task svg { width: 32px; height: 32px; overflow: visible; }
.task.stack { width: 53px; margin-right: 9px; box-shadow: 4px 0 0 -1px #343c44, 5px 0 0 -1px #9aa3aa; }
.task.bare { background: none; border-color: transparent; box-shadow: none; }
.task.bare svg { width: 30px; height: 32px; }
.task.lit { background: linear-gradient(135deg, #eef0f1, #a4abb0 50%, #8a9298 60%, #b0b6ba); border-color: #e0e4e6; }
.task.hot { background: linear-gradient(165deg, #f2ec98, #e8c040 35%, #dc8c28 60%, #d46c20); border-color: #fbe9a0; }
.tray { margin-left: auto; display: flex; align-items: center; gap: 8px; margin-right: 12px; padding-top: 2px; }
.tray svg { width: 16px; height: 16px; overflow: visible; } .tray .tri { width: 8px; height: 5px; margin-right: 9px; }
.clock { width: 62px; flex: none; display: flex; flex-direction: column; align-items: center; color: #fff; line-height: 17px; letter-spacing: -0.35px; margin-right: 6px; padding-top: 1px; }
.peek { width: 14px; height: 39px; flex: none; border: 1px solid #8a949c; background: linear-gradient(135deg, #8a9298, #2c3844 60%); }
</style>
